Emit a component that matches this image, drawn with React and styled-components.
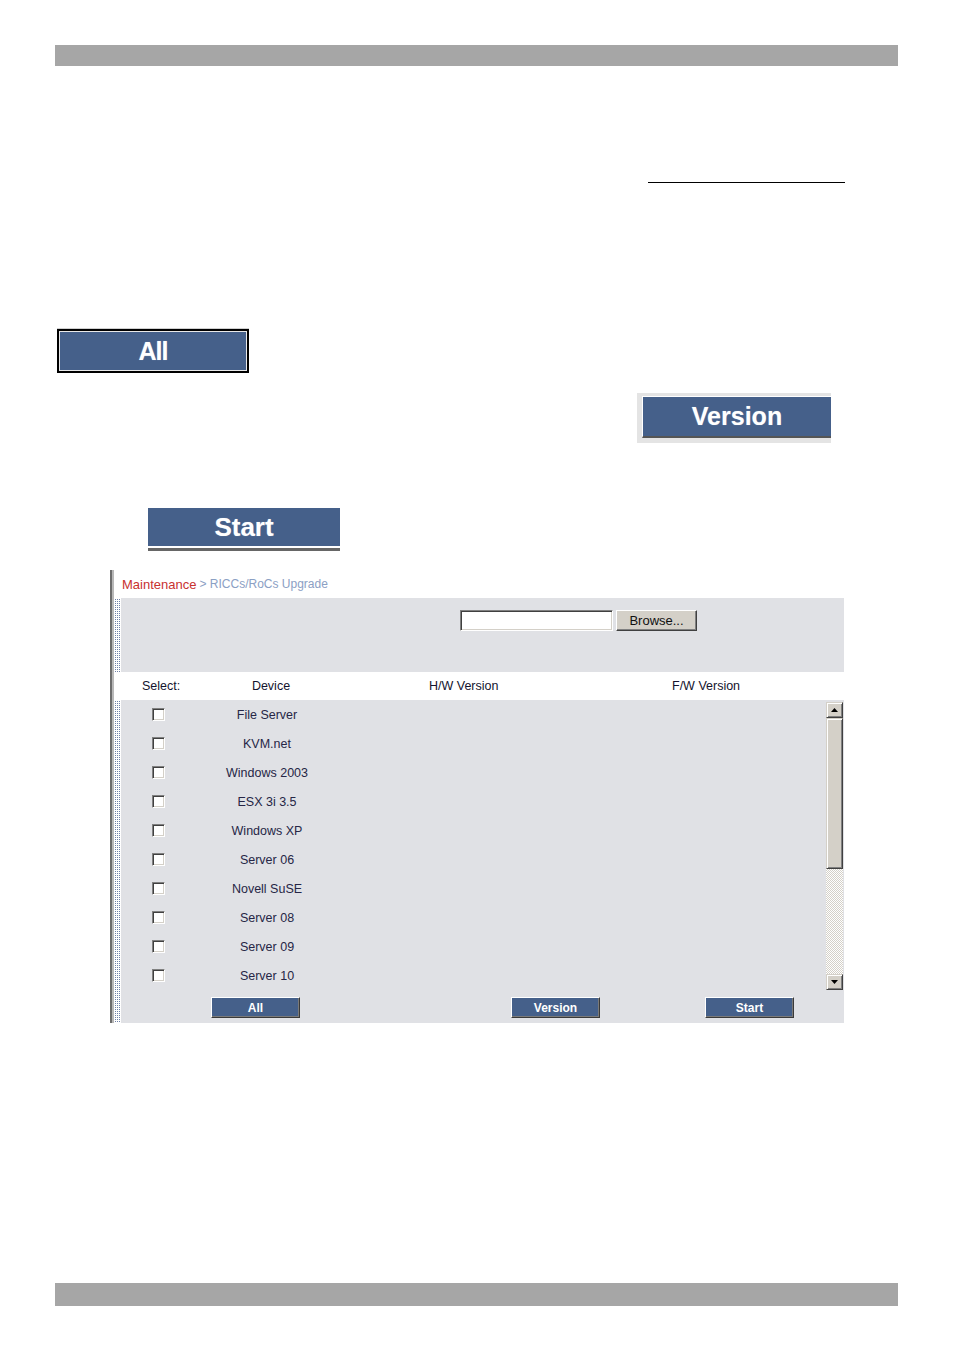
import React from 'react'
import styled, { createGlobalStyle, css } from 'styled-components'

const GlobalStyle = createGlobalStyle`
  body {
    margin: 0;
    background: #fff;
    font-family: "Liberation Sans", Arial, sans-serif;
  }
`

const BLUE = '#45608a'

const Page = styled.div`
  width: 954px;
  min-height: 1352px;
  padding-top: 45px;
  box-sizing: border-box;
  display: flex;
  flex-direction: column;
`

const Bar = styled.div`
  margin-left: 55px;
  width: 843px;
  height: ${p => p.$h}px;
  margin-top: ${p => p.$top || 0}px;
  background: #a6a6a6;
`

const Rule = styled.div`
  margin: 116px 0 0 648px;
  width: 197px;
  height: 1px;
  background: #000;
`

const BigFrame = styled.div`
  margin-top: ${p => p.$top}px;
  margin-left: ${p => p.$left}px;
  width: ${p => p.$w}px;
  height: ${p => p.$h}px;
  box-sizing: border-box;
  display: flex;
  ${p => p.$variant === 'framed' && css`
    border: 2px solid #000;
    box-shadow: 0 -1px 0 #d0d0d0;
  `}
  ${p => p.$variant === 'raised' && css`
    background: #e4e4e4;
    padding: 3px 0 5px 5px;
  `}
  ${p => p.$variant === 'lifted' && css`
    padding-top: 2px;
    border-bottom: 3px solid #666;
  `}
`

const BigFace = styled.div`
  flex: 1;
  display: flex;
  align-items: center;
  justify-content: center;
  background: ${BLUE};
  color: #fff;
  font-weight: 700;
  font-size: 25px;
  letter-spacing: ${p => p.$tight ? '-1px' : '0'};
  text-shadow: 0 0 1px rgba(255,255,255,0.4);
  ${p => p.$variant === 'framed' && css`
    border: 1px solid #e8e8e8;
  `}
  ${p => p.$variant === 'raised' && css`
    border-top: 1px solid #fff;
    border-left: 1px solid #fff;
    border-bottom: 2px solid #555;
  `}
  ${p => p.$variant === 'lifted' && css`
    border-bottom: 2px solid #fff;
    font-size: 26px;
  `}
`

const Panel = styled.div`
  margin: 19px 0 0 110px;
  width: 734px;
  box-sizing: border-box;
  border-left: 2px solid #6d6d6d;
  padding-left: 2px;
  background: #b8b8b8;
  display: flex;
  flex-direction: column;
  font-size: 12.5px;
`

const Section = styled.div`
  display: flex;
  height: ${p => p.$h}px;
  background: ${p => p.$shaded ? '#e0e1e5' : '#fff'};
`

const Rail = styled.div`
  width: 7px;
  flex-shrink: 0;
  background-color: #fff;
  ${p => p.$dotted && css`
    background-image:
      linear-gradient(90deg, #fff 1px, transparent 1px),
      linear-gradient(#fff 1px, #6f80a6 1px);
    background-size: 2px 2px;
  `}
`

const Body = styled.div`
  flex: 1;
  display: flex;
  min-width: 0;
`

const Crumb = styled.div`
  padding-left: 8px;
  display: flex;
  align-items: center;
  height: 100%;
  color: #8ba0c4;
  font-size: 12px;
`

const CrumbLink = styled.span`
  color: #c8312f;
  font-size: 13px;
  margin-right: 3px;
`

const UploadRow = styled.div`
  display: flex;
  align-items: flex-start;
  padding: 12px 0 0 339px;
  gap: 3px;
`

const FileField = styled.div`
  width: 153px;
  height: 21px;
  box-sizing: border-box;
  background: #fff;
  border: 1px solid;
  border-color: #808080 #fff #fff #808080;
  box-shadow: inset 1px 1px #404040, inset -1px -1px #d4d0c8;
`

const SysButton = styled.div`
  width: 81px;
  height: 21px;
  box-sizing: border-box;
  background: #d4d0c8;
  border: 1px solid;
  border-color: #fff #404040 #404040 #fff;
  box-shadow: inset -1px -1px #808080;
  display: flex;
  align-items: center;
  justify-content: center;
  font-size: 13px;
  color: #111;
`

const HeadRow = styled.div`
  display: flex;
  align-items: center;
  color: #14142e;
`

const Cell = styled.div`
  width: ${p => p.$w ? `${p.$w}px` : 'auto'};
  padding-left: ${p => p.$pad || 0}px;
  text-align: ${p => p.$center ? 'center' : 'left'};
  box-sizing: border-box;
  flex-shrink: 0;
`

const ListArea = styled.div`
  flex: 1;
  display: flex;
`

const Rows = styled.div`
  flex: 1;
  display: flex;
  flex-direction: column;
`

const Row = styled.div`
  height: 29px;
  display: flex;
  align-items: center;
  color: #262646;
`

const Check = styled.span`
  display: block;
  width: 13px;
  height: 13px;
  margin-left: 31px;
  box-sizing: border-box;
  background: #fff;
  border: 1px solid;
  border-color: #808080 #fff #fff #808080;
  box-shadow: inset 1px 1px #404040, inset -1px -1px #d4d0c8;
`

const Scroll = styled.div`
  width: 17px;
  margin: 2px 1px 0 0;
  display: flex;
  flex-direction: column;
`

const ScrollPart = styled.div`
  height: ${p => p.$h}px;
  box-sizing: border-box;
  background: #d4d0c8;
  border: 1px solid;
  border-color: #d4d0c8 #404040 #404040 #d4d0c8;
  box-shadow: inset 1px 1px #fff, inset -1px -1px #808080;
  display: flex;
  align-items: center;
  justify-content: center;
`

const Track = styled.div`
  flex: 1;
  background: repeating-conic-gradient(#d4d0c8 0 25%, #fff 0 50%) 0 0 / 2px 2px;
`

const Footer = styled.div`
  display: flex;
  padding-top: 7px;
`

const SmallButton = styled.div`
  margin-left: ${p => p.$offset}px;
  width: 89px;
  height: 21px;
  box-sizing: border-box;
  background: ${BLUE};
  border: 1px solid;
  border-color: #fff #3a3a3a #3a3a3a #fff;
  box-shadow: inset -1px -1px #7a7a7a;
  color: #fff;
  font-weight: 700;
  font-size: 12px;
  display: flex;
  align-items: center;
  justify-content: center;
`

const Arrow = ({ down }) => (
  <svg width="7" height="4" viewBox="0 0 7 4">
    <polygon points={down ? '0,0 7,0 3.5,4' : '3.5,0 7,4 0,4'} fill="#000" />
  </svg>
)

const devices = [
  'File Server', 'KVM.net', 'Windows 2003', 'ESX 3i 3.5', 'Windows XP',
  'Server 06', 'Novell SuSE', 'Server 08', 'Server 09', 'Server 10',
]

export default function App() {
  return (
    <Page>
      <GlobalStyle />
      <Bar $h={21} />
      <Rule />

      <BigFrame $variant="framed" $top={146} $left={57} $w={192} $h={44}>
        <BigFace $variant="framed" $tight>All</BigFace>
      </BigFrame>
      <BigFrame $variant="raised" $top={20} $left={637} $w={194} $h={50}>
        <BigFace $variant="raised">Version</BigFace>
      </BigFrame>
      <BigFrame $variant="lifted" $top={63} $left={148} $w={192} $h={45}>
        <BigFace $variant="lifted">Start</BigFace>
      </BigFrame>

      <Panel>
        <Section $h={28}>
          <Crumb>
            <CrumbLink>Maintenance</CrumbLink>&gt; RICCs/RoCs Upgrade
          </Crumb>
        </Section>

        <Section $h={74} $shaded>
          <Rail $dotted />
          <Body>
            <UploadRow>
              <FileField />
              <SysButton>Browse...</SysButton>
            </UploadRow>
          </Body>
        </Section>

        <Section $h={28}>
          <Rail />
          <Body>
            <HeadRow>
              <Cell $w={90} $pad={21}>Select:</Cell>
              <Cell $w={120} $center>Device</Cell>
              <Cell $w={341} $pad={98}>H/W Version</Cell>
              <Cell>F/W Version</Cell>
            </HeadRow>
          </Body>
        </Section>

        <Section $h={290} $shaded>
          <Rail $dotted />
          <Body>
            <ListArea>
              <Rows>
                {devices.map(d => (
                  <Row key={d}>
                    <Cell $w={90}><Check /></Cell>
                    <Cell $w={112} $center>{d}</Cell>
                  </Row>
                ))}
              </Rows>
              <Scroll>
                <ScrollPart $h={16}><Arrow /></ScrollPart>
                <ScrollPart $h={151} />
                <Track />
                <ScrollPart $h={16}><Arrow down /></ScrollPart>
              </Scroll>
            </ListArea>
          </Body>
        </Section>

        <Section $h={33} $shaded>
          <Rail $dotted />
          <Body>
            <Footer>
              <SmallButton $offset={90}>All</SmallButton>
              <SmallButton $offset={211}>Version</SmallButton>
              <SmallButton $offset={105}>Start</SmallButton>
            </Footer>
          </Body>
        </Section>
      </Panel>

      <Bar $h={23} $top={260} />
    </Page>
  )
}
